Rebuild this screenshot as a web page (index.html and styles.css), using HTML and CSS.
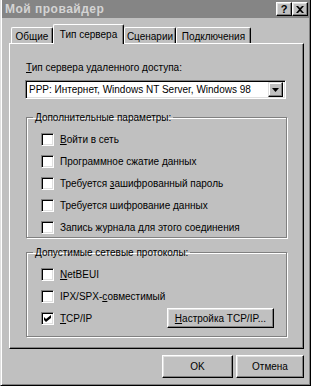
FILE: index.html
```html
<!DOCTYPE html>
<html lang="ru">
<head>
    <meta charset="UTF-8">
    <title>Мой провайдер</title>
    <link rel="stylesheet" href="styles.css">
</head>
<body>
    <div class="window">
        <div class="titlebar">
            <span class="title-text">Мой провайдер</span>
            <div class="title-buttons">
                <span class="title-btn help">?</span>
                <span class="title-btn close">
                    <svg width="8" height="7" viewBox="0 0 8 7"><path d="M0 0h2l2 2 2-2h2L5 3.5 8 7H6L4 5 2 7H0l3-3.5z" fill="#000"/></svg>
                </span>
            </div>
        </div>

        <div class="dialog">
            <div class="tabs">
                <div class="tab tab-general">Общие</div>
                <div class="tab tab-server active">Тип сервера</div>
                <div class="tab tab-script">Сценарии</div>
                <div class="tab tab-links">Подключения</div>
            </div>

            <div class="panel">
                <div class="field-label"><u>Т</u>ип сервера удаленного доступа:</div>
                <div class="combo">
                    <span class="combo-text">PPP: Интернет, Windows NT Server, Windows 98</span>
                    <span class="combo-btn">
                        <svg width="7" height="4" viewBox="0 0 7 4"><path d="M0 0h7L3.5 4z" fill="#000"/></svg>
                    </span>
                </div>

                <fieldset class="group group-options">
                    <legend>Дополнительные параметры:</legend>
                    <div class="check"><span class="box"></span><span><u>В</u>ойти в сеть</span></div>
                    <div class="check"><span class="box"></span><span>Программное сжатие данных</span></div>
                    <div class="check"><span class="box"></span><span>Требуется <u>з</u>ашифрованный пароль</span></div>
                    <div class="check"><span class="box"></span><span>Требуется шифрование данных</span></div>
                    <div class="check"><span class="box"></span><span>Запись журнала для этого соединения</span></div>
                </fieldset>

                <fieldset class="group group-protocols">
                    <legend>Допустимые сетевые протоколы:</legend>
                    <div class="check"><span class="box"></span><span><u>N</u>etBEUI</span></div>
                    <div class="check"><span class="box"></span><span>IPX/SPX-<u>с</u>овместимый</span></div>
                    <div class="check check-row">
                        <span class="box checked">
                            <svg width="7" height="7" viewBox="0 0 7 7"><path d="M0 2l2 2 5-4v3L2 7 0 5z" fill="#000"/></svg>
                        </span>
                        <span><u>T</u>CP/IP</span>
                        <span class="btn btn-tcp"><u>Н</u>астройка TCP/IP...</span>
                    </div>
                </fieldset>
            </div>

            <div class="actions">
                <span class="btn btn-ok">OK</span>
                <span class="btn btn-cancel">Отмена</span>
            </div>
        </div>
    </div>
</body>
</html>
```

FILE: styles.css
```css
* {
    margin: 0;
    padding: 0;
    box-sizing: border-box;
}

body {
    font-family: 'Liberation Sans', Arial, sans-serif;
    font-size: 10px;
    line-height: 13px;
    color: #000;
    background: #c0c0c0;
    white-space: nowrap;
}

u {
    text-decoration: underline;
    text-underline-offset: 1px;
}

.window {
    width: 311px;
    height: 386px;
    background: #c0c0c0;
    border: 1px solid;
    border-color: #dfdfdf #000 #000 #dfdfdf;
    border-top: 0;
    padding: 0 1px 1px;
    box-shadow: inset 1px 0 #fff, inset -1px -1px #808080;
}

.titlebar {
    height: 18px;
    background: #858585;
    display: flex;
    align-items: center;
    justify-content: space-between;
    padding: 0 1px 0 3px;
}

.title-text {
    color: #d4d4d4;
    font-weight: bold;
    font-size: 12px;
    letter-spacing: 0.5px;
}

.title-buttons {
    display: flex;
}

.title-btn {
    width: 16px;
    height: 14px;
    background: #c0c0c0;
    border: 1px solid;
    border-color: #fff #000 #000 #fff;
    box-shadow: inset -1px -1px #808080, inset 1px 1px #dfdfdf;
    display: flex;
    align-items: center;
    justify-content: center;
    font-weight: bold;
    font-size: 11px;
}

.dialog {
    padding: 6px 0 0 7px;
}

.tabs {
    display: flex;
    align-items: flex-end;
    height: 19px;
    padding-left: 2px;
}

.tab {
    height: 16px;
    border: 1px solid;
    border-color: #fff #000 transparent #fff;
    border-bottom: 0;
    border-radius: 2px 2px 0 0;
    box-shadow: inset -1px 0 #808080;
    text-align: center;
    padding-top: 2px;
}

.tab.active {
    height: 20px;
    margin-bottom: -1px;
    position: relative;
    z-index: 1;
    background: #c0c0c0;
    padding-top: 3px;
}

.tab-general { width: 42px; }
.tab-server { width: 71px; }
.tab-script { width: 52px; }
.tab-links { width: 75px; }

.panel {
    width: 295px;
    height: 306px;
    border: 1px solid;
    border-color: #fff #000 #000 #fff;
    box-shadow: inset -1px -1px #808080;
    padding: 17px 0 0 15px;
}

.field-label {
    padding-left: 1px;
}

.combo {
    width: 261px;
    height: 19px;
    margin-top: 6px;
    display: flex;
    align-items: center;
    justify-content: space-between;
    background: #fff;
    border: 1px solid;
    border-color: #808080 #fff #fff #808080;
    box-shadow: inset 1px 1px #000, inset -1px -1px #dfdfdf;
    padding: 2px;
}

.combo-text {
    padding-left: 1px;
}

.combo-btn {
    width: 15px;
    height: 15px;
    background: #c0c0c0;
    border: 1px solid;
    border-color: #dfdfdf #000 #000 #dfdfdf;
    box-shadow: inset -1px -1px #808080, inset 1px 1px #fff;
    display: flex;
    align-items: center;
    justify-content: center;
}

.group {
    width: 261px;
    margin-left: 1px;
    border: 1px solid #808080;
    box-shadow: 1px 1px 0 #fff, inset 1px 1px 0 #fff;
    padding: 4px 0 0 14px;
}

.group legend {
    margin-left: -8px;
    padding: 0 2px;
}

.group-options {
    height: 127px;
    margin-top: 12px;
}

.group-protocols {
    height: 91px;
    margin-top: 8px;
}

.check {
    display: flex;
    align-items: center;
    gap: 6px;
    height: 22px;
}

.box {
    width: 13px;
    height: 13px;
    background: #fff;
    border: 1px solid;
    border-color: #808080 #fff #fff #808080;
    box-shadow: inset 1px 1px #000, inset -1px -1px #dfdfdf;
    display: flex;
    align-items: center;
    justify-content: center;
}

.check-row .btn-tcp {
    margin-left: auto;
    margin-right: 12px;
}

.btn {
    display: flex;
    align-items: center;
    justify-content: center;
    background: #c0c0c0;
    border: 1px solid;
    border-color: #fff #000 #000 #fff;
    box-shadow: inset -1px -1px #808080, inset 1px 1px #dfdfdf;
}

.btn-tcp {
    width: 107px;
    height: 20px;
}

.actions {
    display: flex;
    justify-content: flex-end;
    gap: 3px;
    width: 295px;
    margin-top: 6px;
}

.btn-ok {
    width: 71px;
    height: 23px;
}

.btn-cancel {
    width: 68px;
    height: 23px;
}
```
